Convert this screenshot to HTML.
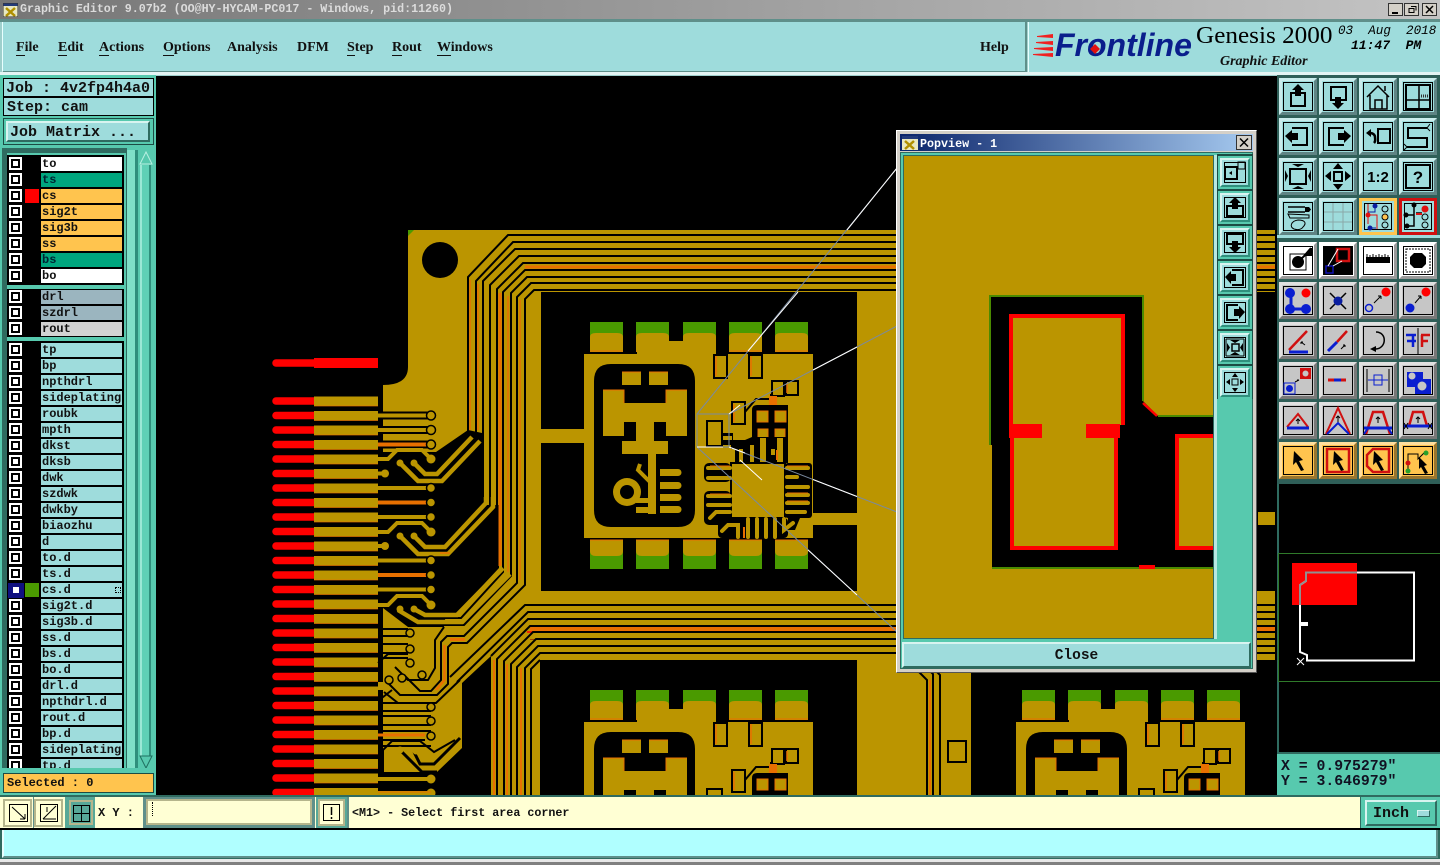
<!DOCTYPE html>
<html><head><meta charset="utf-8"><title>Graphic Editor</title>
<style>
html,body{margin:0;padding:0;background:#000}
#p{position:relative;width:1440px;height:865px;overflow:hidden;background:#000;font-family:"Liberation Mono",monospace;font-weight:bold;color:#111}
#p div,#p svg{position:absolute}
.m{font:bold 14px "Liberation Serif",serif;top:40px;white-space:nowrap}
.m u{text-decoration:none;border-bottom:1px solid #111}
.g{left:7px;width:117px;background:#000;overflow:hidden}
.g>div{position:relative!important;height:16px}
.g i{position:absolute;left:4px;top:3px;width:5px;height:5px;background:#fff;border:2px solid #000;box-shadow:0 0 0 2px #fff}
.g b{position:absolute;left:34px;top:1px;width:80px;height:14px;padding-left:1px;font-size:12px;line-height:15px;background:#9edcdc;overflow:hidden}
.g em{position:absolute;left:18px;top:1px;width:14px;height:14px}
.W{background:#fff!important}.T{background:#00a67e!important;color:#023!important}.Y{background:#ffc44e!important}.S{background:#9bb5bf!important}.L{background:#d3d3d3!important}
.bv{box-sizing:border-box;border:2px solid;border-color:#d8f4f0 #2f6b60 #2f6b60 #d8f4f0}
</style></head><body><div id="p">

<!-- PCB canvas -->
<svg width="1440" height="796" style="left:0;top:0" viewBox="0 0 1440 796">
<defs>
<clipPath id="cv"><rect x="156" y="76" width="1121" height="719"/></clipPath>
<g id="f"><path d="M276 0H314" stroke="#f00" stroke-width="7.500" stroke-linecap="round" fill="none"/><rect x="314" y="-4.500" width="64" height="9.500" fill="#bb9500"/><path d="M314 5H378" stroke="#e87000" stroke-width="1" stroke-opacity=".65"/></g>
<g id="tr"><path d="M378 0H431" stroke="#000" stroke-width="8" fill="none"/><path d="M378 0H431" stroke="#bb9500" stroke-width="4" fill="none"/><circle cx="431" cy="0" r="4.500" fill="#bb9500" stroke="#000" stroke-width="1.500"/></g>
<g id="tro"><path d="M378 0H431" stroke="#000" stroke-width="8" fill="none"/><path d="M378 0H431" stroke="#e87000" stroke-width="4" fill="none"/><circle cx="431" cy="0" r="4.500" fill="#bb9500" stroke="#000" stroke-width="1.500"/></g>
<g id="st"><path d="M378 0H385" stroke="#bb9500" stroke-width="4"/><circle cx="385" cy="0" r="4" fill="#bb9500"/></g>
<g id="pt"><path d="M378 0H388L397 -9H422L431 0" stroke="#bb9500" stroke-width="4" fill="none"/><circle cx="431" cy="0" r="4.500" fill="#bb9500"/><circle cx="400" cy="4" r="3.500" fill="#bb9500"/><circle cx="414" cy="4" r="3.500" fill="#bb9500"/></g>
<g id="gp"><rect x="0" y="322" width="33" height="30" fill="#4a9a00"/><path d="M0 352V337Q0 333 6 333H27Q33 333 33 337V352Z" fill="#bb9500"/><path d="M0 351H33" stroke="#e87000"/></g>
<g id="gq"><rect x="0" y="540" width="33" height="29" fill="#4a9a00"/><path d="M0 540V551Q0 556 6 556H27Q33 556 33 551V540Z" fill="#bb9500"/><path d="M0 540H33" stroke="#e87000"/></g>
<g id="bt">
<use href="#gp" x="590"/><use href="#gp" x="636"/><use href="#gp" x="683"/><use href="#gp" x="729"/><use href="#gp" x="775"/>
<path d="M637 354V342Q637 338 640 338H669V341H683V338H711Q716 338 716 343V354Z" fill="#bb9500"/>
<rect x="584" y="354" width="229" height="73" fill="#bb9500"/>
<path d="M594 427V381Q594 364 611 364H678Q695 364 695 381V427Z" fill="#000"/>
<g fill="#bb9500">
<rect x="622" y="372" width="19" height="13"/><rect x="649" y="372" width="19" height="13"/>
<path d="M603 390H624V403H666V390H687V427H666V422H654V427H636V422H624V427H603Z"/>
</g>
<path d="M603 390H624V403M687 390H666V403M622 372H641M649 372H668" stroke="#e87000" fill="none"/>
<g fill="#bb9500" stroke="#000" stroke-width="2">
<rect x="714" y="355" width="13" height="23"/><rect x="749" y="355" width="13" height="23"/>
<rect x="772" y="381" width="12" height="15"/><rect x="786" y="381" width="12" height="14"/>
<rect x="732" y="402" width="13" height="22"/>
</g>
<path d="M707 427V421H722V427" fill="none" stroke="#000" stroke-width="2"/>
<path d="M716 356V376M751 356V376M787 383V393M734 404V422" stroke="#e87000" stroke-width="1.500"/>
<path d="M745 412L756 399H771V394" stroke="#000" stroke-width="2" fill="none"/>
<path d="M773 396V405" stroke="#e87000" stroke-width="8"/>
<path d="M752 427V410Q752 405 757 405H788V427Z" fill="#000"/>
<g fill="#bb9500" stroke="#e87000"><rect x="757" y="411" width="11" height="11"/><rect x="775" y="411" width="11" height="11"/></g>
</g>
<g id="bb">
<rect x="584" y="427" width="229" height="111" fill="#bb9500"/>
<use href="#gq" x="590"/><use href="#gq" x="636"/><use href="#gq" x="683"/><use href="#gq" x="729"/><use href="#gq" x="775"/>
<path d="M594 427V510Q594 527 611 527H678Q695 527 695 510V427Z" fill="#000"/>
<g fill="#bb9500">
<rect x="603" y="427" width="21" height="9"/><rect x="666" y="427" width="21" height="9"/>
<path d="M636 427H654V441H668V454H656V477H648V454H622V441H636Z"/>
<circle cx="627" cy="492" r="14"/>
<rect x="648" y="468" width="8" height="46"/>
<path d="M660 469H678a3.500 3.500 0 0 1 0 7H660ZM660 482H678a3.500 3.500 0 0 1 0 7H660ZM660 494H678a3.500 3.500 0 0 1 0 7H660ZM660 506H678a3.500 3.500 0 0 1 0 7H660Z"/>
<rect x="636" y="498" width="20" height="5"/><rect x="636" y="507" width="20" height="6"/>
</g>
<circle cx="627" cy="492" r="7" fill="#000"/>
<path d="M640 464L638 470L650 482" stroke="#bb9500" stroke-width="4" fill="none"/>
<path d="M707 427V446H722V427" fill="#bb9500" stroke="#000" stroke-width="2"/>
<path d="M752 437V427H788V437Z" fill="#000"/>
<g fill="#bb9500" stroke="#e87000"><rect x="758" y="429" width="10" height="9"/><rect x="775" y="429" width="10" height="9"/></g>
<path d="M752 437H788V463H731V445H722V433H733V440H745L752 437Z" fill="#000"/>
<g stroke="#bb9500" fill="none"><path d="M763 438V462M780 438V462M771 452H775" stroke-width="6"/><path d="M733 449V463M741 449V463M752 445V463" stroke-width="4"/><path d="M723 438H732" stroke-width="4"/></g>
<path d="M777 450V460" stroke="#e87000" stroke-width="2"/>
<rect x="731" y="463" width="54" height="55" fill="#bb9500" stroke="#000" stroke-width="2"/>
<rect x="704" y="463" width="27" height="19" rx="5" fill="#000"/><rect x="704" y="491" width="27" height="34" rx="5" fill="#000"/>
<rect x="785" y="463" width="27" height="55" rx="3" fill="#000"/><rect x="718" y="518" width="70" height="20" rx="4" fill="#000"/><path d="M788 518H800L795 530H788Z" fill="#000"/>
<g stroke="#bb9500" stroke-width="4" stroke-linecap="round" fill="none"><path d="M708 468H730M708 478H730M708 496H730M708 505H730M710 518L716 512H730"/><path d="M787 468H808M787 477H797M787 487H808M787 495H808M787 503H808M787 512H805"/><path d="M722 531L728 525H738V537M748 519V537M757 519V537M766 519V537M775 519V537M784 519V530L793 523"/></g>
<path d="M710 466H730M787 466H808M787 493H808M787 501H808M710 494H730" stroke="#e87000" fill="none"/>
<path d="M744 527V538" stroke="#e87000" stroke-width="2"/>
</g>
</defs>
<g clip-path="url(#cv)">
<!-- fingers -->
<path d="M276 363H314" stroke="#f00" stroke-width="7.500" stroke-linecap="round"/><rect x="314" y="358" width="64" height="10" fill="#f00"/>
<use href="#f" y="401"/><use href="#f" y="415.500"/><use href="#f" y="430"/><use href="#f" y="444.500"/><use href="#f" y="459"/><use href="#f" y="473.500"/><use href="#f" y="488"/><use href="#f" y="502.500"/><use href="#f" y="517"/><use href="#f" y="531.500"/><use href="#f" y="546"/><use href="#f" y="560.500"/><use href="#f" y="575"/><use href="#f" y="589.500"/><use href="#f" y="604"/><use href="#f" y="618.500"/><use href="#f" y="633"/><use href="#f" y="647.500"/><use href="#f" y="662"/><use href="#f" y="676.500"/><use href="#f" y="691"/><use href="#f" y="705.500"/><use href="#f" y="720"/><use href="#f" y="734.500"/><use href="#f" y="749"/><use href="#f" y="763.500"/><use href="#f" y="778"/><use href="#f" y="792.500"/>
<!-- base gold -->
<g fill="#bb9500">
<path d="M408 230H1275V292H541V429H584V443H541V591H1275V660H971V795H857V660H540V795H491V656L462 683V748L437 772H383V690L378 690V682H383V608L408 627H444L446 613H457L499 568V505H482V433L468 430L436 452H383V385Q408 385 408 367Z"/>
<rect x="857" y="292" width="60" height="300"/>
<rect x="813" y="513" width="44" height="12"/>
<rect x="1258" y="512" width="17" height="13"/>
</g>
<path d="M408 230h6l-6 6z" fill="#4a9a00"/>
<circle cx="440" cy="260" r="18" fill="#000"/>
<!-- band orange -->
<path d="M525 267H1275" stroke="#e87000" stroke-width="3"/><path d="M527 632H1275" stroke="#f00" stroke-width="1.500"/><path d="M530 629H1275" stroke="#e87000" stroke-width="4"/><path d="M530 639.500H1275" stroke="#a04000" stroke-width="1"/>
<path d="M470 280V430M478 284V430M520 300V580M508 296V572" stroke="#e87000" stroke-width="1.500" fill="none"/><path d="M500 293V566" stroke="#e87000" stroke-width="3"/>
<path d="M494 660V795M507 664V795M521 668V795" stroke="#e87000" stroke-width="2" fill="none"/>
<!-- black trace lines top -->
<g stroke="#000" stroke-width="2" fill="none">
<path d="M1275 235H508L468 277V433L442 460"/>
<path d="M1275 242H513L476 281V433L450 462"/>
<path d="M1275 249H515L483 281V505"/>
<path d="M1275 256H519L490 285V505L450 552"/>
<path d="M1275 263H523L497 289V566L457 611H420"/>
<path d="M1275 270H525L503 292V572L461 618H420"/>
<path d="M1275 277H527L511 293V576L464 625H410L400 614"/>
<path d="M1275 283H531L517 297V583L464 636H447L441 642V680L431 691H420L404 675"/>
<path d="M1275 290H534L525 299V585L467 643H452L448 647V684L437 695H400L388 683"/>
<!-- lower band -->
<path d="M1275 605H525L450 677"/>
<path d="M1275 612H528L457 682"/>
<path d="M1275 619H528L491 656"/>
<path d="M1275 626H530L497 659V795"/>
<path d="M1275 632H533L504 661V795"/>
<path d="M1275 639H536L511 664V795"/>
<path d="M1275 646H538L517 667V795"/>
<path d="M1275 653H540L525 668V795"/>
<path d="M540 660L531 669V795"/>
<path d="M444 627L435 640V668L428 680H408L395 667"/>
<path d="M384 692L398 703H436L460 680"/>
</g>
<path d="M450 639.500H465" stroke="#e87000" stroke-width="3" fill="none"/>
<path d="M444.500 645V680L436 690" stroke="#e87000" stroke-width="2.500" fill="none"/>
<!-- gold trace bundles on black -->
<g stroke="#bb9500" stroke-width="4.500" fill="none">
<path d="M400 463L418 481H442L480 441"/><path d="M414 463L425 474H437L472 437"/>
<path d="M400 536L418 554H448L493 507V497"/><path d="M414 536L425 547H445L486 503V497"/>
<path d="M398 610L418 622H462L510 574"/><path d="M414 609L425 615H457L503 568"/>
</g>
<path d="M440 553H450" stroke="#e87000" stroke-width="1.500"/>
<use href="#tr" y="415.500"/><use href="#tr" y="430"/><use href="#tro" y="444.500"/>
<use href="#pt" y="459"/><use href="#st" y="473.500"/>
<use href="#tr" y="488"/><use href="#tro" y="502.500"/><use href="#tr" y="517"/>
<use href="#pt" y="532"/><use href="#st" y="546"/>
<use href="#tr" y="560.500"/><use href="#tro" y="575"/><use href="#tr" y="589.500"/>
<use href="#pt" y="605"/>
<!-- mid rows with pad 410 -->
<g stroke="#000" stroke-width="2" fill="none"><path d="M378 629H408M383 636H408M378 644H408M378 653H408M383 658H408"/><path d="M378 701L392 690"/><path d="M378 703H431M378 711H431M383 716H431M378 725H431M383 731H431M378 740H425M378 746H431"/></g>
<g fill="#bb9500" stroke="#000" stroke-width="1.500"><circle cx="410" cy="633" r="4"/><circle cx="410" cy="649" r="4"/><circle cx="410" cy="663" r="4"/><circle cx="422" cy="675" r="4"/><circle cx="389" cy="680" r="4"/><circle cx="402" cy="678" r="4"/><circle cx="431" cy="707" r="4"/><circle cx="431" cy="721" r="4"/><circle cx="431" cy="736" r="4"/></g>
<path d="M378 735H425" stroke="#e87000" stroke-width="3"/>
<path d="M378 663L388 654H408" stroke="#000" stroke-width="2" fill="none"/>
<!-- pattern at 750 -->
<path d="M383 772V750L392 741H420L434 752L455 740" stroke="#000" stroke-width="2" fill="none"/>
<path d="M400 750L422 772H437M414 752L420 764H434L460 738" stroke="#000" stroke-width="3" fill="none"/>
<g fill="#bb9500"><circle cx="400" cy="750" r="3.500"/><circle cx="416" cy="751" r="3.500"/></g>
<g stroke="#bb9500" stroke-width="4" fill="none"><path d="M378 779H431M378 793H431"/></g><circle cx="431" cy="779" r="4.500" fill="#bb9500"/><circle cx="431" cy="793" r="4.500" fill="#bb9500"/><path d="M378 792H431" stroke="#e87000"/>
<!-- blocks -->
<use href="#bt"/><use href="#bb"/>
<use href="#bt" y="368"/>
<use href="#bt" x="432" y="368"/>
<!-- right column detail -->
<rect x="948" y="741" width="18" height="21" fill="#bb9500" stroke="#000" stroke-width="2"/>
<path d="M918 671L927 680V795M930 671L933 674V795M936 671L940 675V795" stroke="#000" stroke-width="2" fill="none"/>
<path d="M930 680V795" stroke="#e87000" stroke-width="2"/>
<!-- leader lines -->
<g stroke="#7a8aa0" stroke-width="1" fill="none">
<path d="M697 414H729V447H697Z"/>
<path d="M697 414L897 168"/><path d="M729 414L897 326"/><path d="M729 447L897 512"/><path d="M697 447L897 632"/>
</g>
<g stroke="#fff" stroke-width="1" fill="none">
<path d="M748 351L798 292M847 230L897 168M813 370L857 347M813 479.500L857 496.500M808 550L857 595M697 447H723M729 447L745 453M740 460L762 480M740 405L729 414"/>
</g>
</g>
</svg>

<!-- title -->
<div style="left:0;top:0;width:1440px;height:19px;background:linear-gradient(90deg,#767676,#c4c4c4)"></div>
<svg style="left:3px;top:3px" width="15" height="14"><rect width="15" height="14" fill="#e8e8c0"/><rect width="15" height="3" fill="#223a7a"/><path d="M3 5L12 13M12 5L3 13" stroke="#b09000" stroke-width="2.500"/><rect y="0" width="15" height="14" fill="none" stroke="#333"/></svg>
<div style="left:20px;top:2px;font-size:11.700px;line-height:14px;color:#dcdcdc;white-space:pre;letter-spacing:-.03px">Graphic Editor 9.07b2 (OO@HY-HYCAM-PC017 - Windows, pid:11260)</div>
<svg style="left:1388px;top:3px" width="50" height="13"><g fill="#d4d0c8" stroke="#333"><rect x=".5" y=".5" width="14" height="12"/><rect x="16.500" y=".5" width="14" height="12"/><rect x="34.500" y=".5" width="14" height="12"/></g><path d="M4 10H10" stroke="#000" stroke-width="2"/><path d="M21 5.500h5v4h-5zM23 3.500h5v4" stroke="#000" fill="none"/><path d="M38 3L45 10M45 3L38 10" stroke="#000" stroke-width="1.500"/></svg>

<!-- menu -->
<div style="left:0;top:19px;width:1440px;height:57px;background:#9ecfcc"></div>
<div style="left:0;top:19px;width:1440px;height:3px;background:#5f8f8a"></div>
<div style="left:2px;top:22px;width:1022px;height:49px;background:#9edcdc;border-left:1px solid #e8ffff;border-bottom:2px solid #5f8f8a"></div>
<div style="left:1025px;top:22px;width:2px;height:50px;background:#5f8f8a"></div>
<div style="left:1028px;top:22px;width:412px;height:50px;background:#9edcdc;border-left:1px solid #e8ffff"></div>
<div style="left:0;top:72px;width:1440px;height:3px;background:#e4f4f4"></div>
<div class="m" style="left:16px"><u>F</u>ile</div><div class="m" style="left:58px"><u>E</u>dit</div><div class="m" style="left:99px"><u>A</u>ctions</div><div class="m" style="left:163px"><u>O</u>ptions</div><div class="m" style="left:227px">Analysis</div><div class="m" style="left:297px">DFM</div><div class="m" style="left:347px"><u>S</u>tep</div><div class="m" style="left:392px"><u>R</u>out</div><div class="m" style="left:437px"><u>W</u>indows</div><div class="m" style="left:980px">Help</div>

<!-- logo -->
<svg style="left:1032px;top:32px" width="24" height="28"><g fill="#f02020"><path d="M5 4L21 2V6L5 5ZM4 10L21 9V13L4 11ZM2 16L21 15V19L2 17ZM1 22L21 21V25L1 23Z"/></g></svg>
<div style="left:1055px;top:26px;font:italic bold 32px/38px 'Liberation Sans',sans-serif;color:#0a1e8c;white-space:nowrap">Frontline</div>
<svg style="left:1090px;top:44px" width="10" height="10"><path d="M5 0L10 5L5 10L0 5Z" fill="#e01010"/></svg>
<div style="left:1196px;top:21px;font:normal 24px/30px 'Liberation Serif',serif;color:#000;white-space:nowrap;transform:scaleX(1.05);transform-origin:0 0">Genesis 2000</div>
<div style="left:1220px;top:53px;font:italic bold 14px/17px 'Liberation Serif',serif;color:#111;white-space:nowrap">Graphic Editor</div>
<div style="left:1338px;top:23px;font:italic normal 12.600px/16px 'Liberation Mono',monospace;color:#000;white-space:pre">03  Aug  2018</div>
<div style="left:1351px;top:38px;font:italic bold 13px/16px 'Liberation Mono',monospace;color:#000;white-space:pre">11:47  PM</div>

<!-- left panel -->
<div style="left:0;top:75px;width:156px;height:722px;background:#57c9ae"></div>
<div style="left:3px;top:78px;width:149px;height:17px;background:#9edcdc;border:1px solid #000;font-size:15px;line-height:19px;text-indent:2px;white-space:pre">Job : 4v2fp4h4a0</div>
<div style="left:3px;top:97px;width:149px;height:17px;background:#9edcdc;border:1px solid #000;font-size:15px;line-height:19px;text-indent:3px;white-space:pre">Step: cam</div>
<div style="left:3px;top:118px;width:149px;height:25px;border:1px solid #1c4c44"></div>
<div class="bv" style="left:6px;top:121px;width:144px;height:21px;background:#9edcdc;font-size:15px;line-height:20px;text-indent:2px;white-space:pre">Job Matrix ...</div>
<div style="left:2px;top:148px;width:125px;height:622px;background:#2f6b60"></div>
<div style="left:5px;top:153px;width:121px;height:617px;background:#57c9ae;border-left:2px solid #2f6b60;box-sizing:border-box"></div>
<div style="left:127px;top:150px;width:8px;height:620px;background:#7fe0c8"></div>
<div style="left:135px;top:150px;width:3px;height:620px;background:#2f8f7c"></div>
<div style="left:140px;top:165px;width:11px;height:592px;background:#5fd0b6;border-left:2px solid #9be8d6;border-right:2px solid #2f8f7c;box-sizing:border-box"></div>
<svg style="left:139px;top:151px" width="14" height="14"><path d="M7 1L13 13H1Z" fill="#57c9ae" stroke="#b8f0e2"/></svg>
<svg style="left:139px;top:755px" width="14" height="14"><path d="M7 13L13 1H1Z" fill="#57c9ae" stroke="#1f7060"/></svg>
<div class="g" style="top:155px;height:130px"><div style="height:1px"></div>
<div><i></i><b class="W">to</b></div><div><i></i><b class="T">ts</b></div><div><i></i><em style="background:#f00"></em><b class="Y">cs</b></div><div><i></i><b class="Y">sig2t</b></div><div><i></i><b class="Y">sig3b</b></div><div><i></i><b class="Y">ss</b></div><div><i></i><b class="T">bs</b></div><div><i></i><b class="W">bo</b></div></div>
<div class="g" style="top:289px;height:48px"><div><i></i><b class="S">drl</b></div><div><i></i><b class="S">szdrl</b></div><div><i></i><b class="L">rout</b></div></div>
<div class="g" style="top:341px;height:428px"><div style="height:1px"></div>
<div><i></i><b>tp</b></div><div><i></i><b>bp</b></div><div><i></i><b>npthdrl</b></div><div><i></i><b>sideplating</b></div><div><i></i><b>roubk</b></div><div><i></i><b>mpth</b></div><div><i></i><b>dkst</b></div><div><i></i><b>dksb</b></div><div><i></i><b>dwk</b></div><div><i></i><b>szdwk</b></div><div><i></i><b>dwkby</b></div><div><i></i><b>biaozhu</b></div><div><i></i><b>d</b></div><div><i></i><b>to.d</b></div><div><i></i><b>ts.d</b></div><div style="background:#000"><i style="background:#fff"></i><em style="background:#4a9a00"></em><b>cs.d</b><span style="position:absolute;left:108px;top:5px;width:4px;height:4px;border:1px dotted #000"></span></div><div><i></i><b>sig2t.d</b></div><div><i></i><b>sig3b.d</b></div><div><i></i><b>ss.d</b></div><div><i></i><b>bs.d</b></div><div><i></i><b>bo.d</b></div><div><i></i><b>drl.d</b></div><div><i></i><b>npthdrl.d</b></div><div><i></i><b>rout.d</b></div><div><i></i><b>bp.d</b></div><div><i></i><b>sideplating</b></div><div><i></i><b>tp.d</b></div></div>
<div style="left:8px;top:583px;width:16px;height:15px;background:#101080"></div>
<div style="left:13px;top:587px;width:6px;height:6px;background:#fff"></div>
<div style="left:0;top:768px;width:156px;height:29px;background:#57c9ae"></div>
<div style="left:3px;top:773px;width:149px;height:18px;background:#ffc44e;border:1px solid #1c4c44;font-size:12px;line-height:18px;text-indent:3px;white-space:pre">Selected : 0</div>

<!-- palette -->
<div style="left:1277px;top:75px;width:163px;height:409px;background:#2f5f58"></div>
<div style="left:1277px;top:235px;width:163px;height:3px;background:#9edcdc"></div>
<svg style="left:1277px;top:76px" width="163" height="408" viewBox="1277 76 163 408">
<defs>
<g id="bv"><rect width="38" height="37"/><path d="M0 0H38L35 3H3V34L0 37Z" fill="#fff" opacity=".45"/><path d="M38 37H0L3 34H35V3L38 0Z" fill="#000" opacity=".4"/><rect x="4.500" y="4.500" width="29" height="28" fill="none" stroke="#000"/></g>
</defs>
<g fill="#9edcdc">
<g transform="translate(1279 78)"><use href="#bv"/><path d="M12 15h14v13H12z" fill="none" stroke="#000" stroke-width="2"/><path d="M19 6l-6 6h3v6h6v-6h3z" fill="#000"/></g>
<g transform="translate(1319 78)"><use href="#bv"/><path d="M12 9h15v13H12z" fill="none" stroke="#000" stroke-width="2"/><path d="M19 31l-6 -6h3v-6h6v6h3z" fill="#000"/></g>
<g transform="translate(1359 78)"><use href="#bv"/><path d="M8 19L19 8L30 19M11 17V31H28V17M16 31V22H23V31M26 8V13" fill="none" stroke="#000" stroke-width="1.500"/></g>
<g transform="translate(1399 78)"><use href="#bv"/><path d="M7 7h24v24H7zM7 22H31M20 7V31" fill="none" stroke="#000" stroke-width="1.500"/><path d="M7 7h24v24H7z" fill="none" stroke="#000" stroke-width="2"/><path d="M22 18h7" stroke="#333" stroke-dasharray="1 1" stroke-width="3"/></g>
<g transform="translate(1279 118)"><use href="#bv"/><path d="M13 10h15v17H13" fill="none" stroke="#000" stroke-width="2"/><path d="M6 18l7-6v3h6v7h-6v3z" fill="#000"/></g>
<g transform="translate(1319 118)"><use href="#bv"/><path d="M25 10H10v17h15" fill="none" stroke="#000" stroke-width="2"/><path d="M32 18l-7-6v3h-6v7h6v3z" fill="#000"/></g>
<g transform="translate(1359 118)"><use href="#bv"/><path d="M19 11h12v14H19z" fill="none" stroke="#000" stroke-width="2"/><path d="M15 25c2-2 1-4 1-6s-2-4-5-4" fill="none" stroke="#000" stroke-width="2.500"/><path d="M7 15l5-4v8z" fill="#000"/></g>
<g transform="translate(1399 118)"><use href="#bv"/><path d="M28 10H9V20H28V29H8" fill="none" stroke="#000" stroke-width="2"/><path d="M31 6l-3 4 3 3M5 26l3 3-3 3" fill="none" stroke="#000"/></g>
<g transform="translate(1279 158)"><use href="#bv"/><path d="M11 11H27V26H11Z" fill="none" stroke="#000" stroke-width="2"/><path d="M19 9l-6-3h12zM19 28l-6 3h12zM9 18l-3-6v12zM29 18l3-6v12z" fill="#000"/></g>
<g transform="translate(1319 158)"><use href="#bv"/><path d="M15 14H23V23H15Z" fill="none" stroke="#000" stroke-width="2"/><path d="M19 5l-5 6h10zM19 32l-5-6h10zM6 18l6-5v10zM32 18l-6-5v10z" fill="#000"/></g>
<g transform="translate(1359 158)"><use href="#bv"/><text x="19" y="24" text-anchor="middle" font-family="Liberation Sans,sans-serif" font-weight="bold" font-size="15" fill="#000">1:2</text></g>
<g transform="translate(1399 158)"><use href="#bv"/><rect x="7" y="7" width="24" height="23" fill="none" stroke="#000" stroke-width="2"/><text x="19" y="25" text-anchor="middle" font-family="Liberation Sans,sans-serif" font-weight="bold" font-size="17" fill="#000">?</text></g>
<g transform="translate(1279 198)"><use href="#bv"/><path d="M9 9H26M9 14H26" stroke="#000" stroke-width="1.500"/><path d="M26 9h4l2 2.500-2 2.500h-4" fill="#000"/><path d="M9 16L30 17V20H11Z" fill="none" stroke="#000"/><path d="M15 31c-5-2-3-8 4-9 7 0 9 3 5 7-2 3-6 3-9 2z" fill="none" stroke="#000"/></g>
<g transform="translate(1319 198)"><use href="#bv"/><path d="M5 14H33M5 24H33M14 5V32M24 5V32" stroke="#8aa8a8"/></g>
<g transform="translate(1359 198)"><rect width="38" height="37" fill="#ffc44e"/><rect x="3" y="3" width="32" height="31"/><rect x="5.500" y="5.500" width="27" height="26" fill="none" stroke="#000"/><path d="M9 6V26M9 17H18V31" stroke="#e01010" fill="none"/><path d="M16 8V14H9M11 30H17" stroke="#0a1ea0" fill="none"/><circle cx="16" cy="8" r="2.500" fill="#0a1ea0"/><circle cx="9" cy="17" r="2.500" fill="#e01010"/><circle cx="11" cy="30" r="2.500" fill="#0a1ea0"/><circle cx="26" cy="11" r="3" fill="none" stroke="#000"/><circle cx="26" cy="19" r="3" fill="#ffc44e" stroke="#000"/><circle cx="26" cy="27" r="3" fill="none" stroke="#000"/></g>
<g transform="translate(1399 198)"><rect width="38" height="37" fill="#d01010"/><rect x="3" y="3" width="32" height="31"/><rect x="5.500" y="5.500" width="27" height="26" fill="none" stroke="#000"/><path d="M15 8V17H7M15 17V28H8M18 16V14M20 16V14M22 16V14" stroke="#000" stroke-width="1.500" fill="none"/><path d="M17 16H23" stroke="#e01010" stroke-width="2"/><circle cx="15" cy="7" r="2.500" fill="#000"/><circle cx="7" cy="17" r="2.500" fill="#000"/><circle cx="8" cy="28" r="2.500" fill="#000"/><circle cx="26" cy="11" r="3.500" fill="#e01010"/><circle cx="26" cy="19" r="3" fill="none" stroke="#000"/><circle cx="26" cy="27" r="3" fill="none" stroke="#000"/></g>
</g>
<g fill="#fff">
<g transform="translate(1279 242)"><use href="#bv"/><rect x="11" y="12" width="16" height="16" fill="none" stroke="#000"/><circle cx="19" cy="20" r="6" fill="#000"/><path d="M23 16L32 8M32 6V13H26L32 6" stroke="#000" stroke-width="2" fill="#000"/></g>
<g transform="translate(1319 242)"><use href="#bv"/><rect x="5" y="5" width="28" height="27" fill="#000"/><rect x="18" y="7" width="12" height="12" fill="none" stroke="#d01010" stroke-width="2.500"/><rect x="7" y="24" width="7" height="7" fill="none" stroke="#1010b0" stroke-width="1.500"/><path d="M14 24L23 19M9 24L19 7" stroke="#fff" fill="none"/></g>
<g transform="translate(1359 242)"><use href="#bv"/><rect x="7" y="15" width="24" height="6" fill="#000"/><path d="M8 12v4M11 13v3M14 12v4M17 13v3M20 12v4M23 13v3M26 12v4M29 13v3" stroke="#000"/></g>
<g transform="translate(1399 242)"><use href="#bv"/><rect x="7" y="7" width="24" height="23" fill="none" stroke="#000" stroke-dasharray="2 1"/><path d="M15 11H23L27 15V22L23 26H15L11 22V15Z" fill="#000"/></g>
</g>
<g fill="#c6c6c6">
<g transform="translate(1279 282)"><use href="#bv"/><path d="M12 11V27H26" stroke="#0a1ed0" stroke-width="3" fill="none"/><circle cx="11" cy="11" r="5" fill="#0a1ed0"/><circle cx="11" cy="27" r="5" fill="#0a1ed0"/><circle cx="27" cy="27" r="5" fill="#0a1ed0"/><circle cx="27" cy="11" r="4.500" fill="#f00"/></g>
<g transform="translate(1319 282)"><use href="#bv"/><path d="M11 11L27 27M27 11L11 27" stroke="#000" stroke-width="1.500"/><circle cx="19" cy="19" r="4.500" fill="#0a1ea0"/></g>
<g transform="translate(1359 282)"><use href="#bv"/><circle cx="10" cy="26" r="3.500" fill="none" stroke="#0a1ed0" stroke-width="1.500"/><path d="M15 21L22 14M22 14h-3M22 14v3" stroke="#000" fill="none"/><circle cx="27" cy="10" r="4.500" fill="#f00"/></g>
<g transform="translate(1399 282)"><use href="#bv"/><circle cx="11" cy="26" r="4.500" fill="#0a1ed0"/><path d="M16 21L22 14M22 14h-3M22 14v3" stroke="#000" fill="none"/><circle cx="27" cy="10" r="4.500" fill="#f00"/></g>
<g transform="translate(1279 322)"><use href="#bv"/><path d="M10 28L28 9" stroke="#d01010" stroke-width="2.500"/><path d="M10 30H29" stroke="#0a1ed0" stroke-width="3"/><path d="M26 23L22 20M22 20v2M22 20h2" stroke="#000" fill="none"/></g>
<g transform="translate(1319 322)"><use href="#bv"/><path d="M9 29L18 20" stroke="#0a1ed0" stroke-width="3"/><path d="M18 20L28 9" stroke="#d01010" stroke-width="2.500"/><path d="M22 27L26 23M26 23h-2M26 23v2" stroke="#000" fill="none"/></g>
<g transform="translate(1359 322)"><use href="#bv"/><path d="M17 10C28 10 28 26 17 27" stroke="#000" stroke-width="1.500" fill="none"/><path d="M11 27l6-3v6z" fill="#000"/></g>
<g transform="translate(1399 322)"><use href="#bv"/><path d="M17 13H7M17 19H8M14 13V25" stroke="#0a1ed0" stroke-width="2.500" fill="none"/><path d="M19 6V32" stroke="#000"/><path d="M22 13H31M22 19H29M23 13V25" stroke="#d01010" stroke-width="2.500" fill="none"/></g>
<g transform="translate(1319 362)"><use href="#bv"/><path d="M9 18H27" stroke="#d01010" stroke-width="3"/><path d="M15 18H22" stroke="#0a1ed0" stroke-width="3"/></g>
<g transform="translate(1279 362)"><use href="#bv"/><rect x="5" y="21" width="11" height="11" fill="#fff" fill-opacity="0" stroke="#0a1ed0"/><circle cx="10.500" cy="26.500" r="3.500" fill="#0a1ed0"/><rect x="21" y="6" width="11" height="11" fill="#d01010"/><circle cx="26.500" cy="11.500" r="3" fill="#c6c6c6"/><path d="M16 20L20 18M20 18h-2" stroke="#000" fill="none"/></g>
<g transform="translate(1359 362)"><use href="#bv"/><path d="M8 7V30M30 7V30" stroke="#000"/><path d="M9 18H29" stroke="#0a1ed0"/><rect x="15" y="13" width="8" height="10" fill="none" stroke="#0a1ed0"/></g>
<g transform="translate(1399 362)"><use href="#bv"/><path d="M8 10H24V17H32V32H16V25H8Z" fill="#0a1ed0"/><circle cx="13" cy="14" r="3.500" fill="#c6c6c6"/><circle cx="23" cy="24" r="4.500" fill="#c6c6c6"/></g>
<g transform="translate(1279 402)"><use href="#bv"/><path d="M8 25L19 12L29 25" stroke="#d01010" stroke-width="2" fill="none"/><path d="M8 26H30" stroke="#0a1ed0" stroke-width="3"/><path d="M19 22V17M17 19l2-2 2 2" stroke="#000" fill="none"/></g>
<g transform="translate(1319 402)"><use href="#bv"/><path d="M7 32L19 6L31 32" stroke="#d01010" stroke-width="2" fill="none"/><path d="M8 32L19 21L30 32" stroke="#0a1ed0" stroke-width="2" fill="none"/><path d="M19 20V14M17 16l2-2 2 2" stroke="#000" fill="none"/></g>
<g transform="translate(1359 402)"><use href="#bv"/><path d="M7 32L14 10H24L31 32" stroke="#d01010" stroke-width="2.500" fill="none"/><path d="M5 26H33" stroke="#0a1ed0" stroke-width="3"/><path d="M5 32L9 26M33 32L29 26" stroke="#0a1ed0" stroke-width="2"/><path d="M19 21V15M17 17l2-2 2 2" stroke="#000" fill="none"/></g>
<g transform="translate(1399 402)"><use href="#bv"/><path d="M10 24L14 10H24L28 24" stroke="#d01010" stroke-width="2.500" fill="none"/><path d="M5 24H33" stroke="#0a1ed0" stroke-width="3"/><path d="M5 21L9 27M9 21L5 27M29 21L33 27M33 21L29 27" stroke="#000"/><path d="M19 21V15M17 17l2-2 2 2" stroke="#000" fill="none"/></g>
</g>
<g fill="#ffc44e">
<g transform="translate(1279 442)"><use href="#bv"/><path d="M15 9L24 18L20 19L25 28L22 29L17 20L14 23Z" fill="#000"/></g>
<g transform="translate(1319 442)"><use href="#bv"/><rect x="8" y="7" width="22" height="23" fill="none" stroke="#d01010" stroke-width="2.500"/><path d="M15 9L24 18L20 19L25 28L22 29L17 20L14 23Z" fill="#000"/></g>
<g transform="translate(1359 442)"><use href="#bv"/><path d="M14 7H30V30H14L8 24V13Z" fill="none" stroke="#d01010" stroke-width="2.500"/><path d="M15 9L24 18L20 19L25 28L22 29L17 20L14 23Z" fill="#000"/></g>
<g transform="translate(1399 442)"><use href="#bv"/><path d="M9 22V12H19V17L27 9M9 22V28" stroke="#000" fill="none"/><circle cx="9" cy="21" r="2.500" fill="#d01010"/><circle cx="27" cy="11" r="2.500" fill="#2aa02a"/><circle cx="9" cy="29" r="2.500" fill="#2aa02a"/><path d="M20 15L28 23L25 24L29 31L26 32L22 25L20 27Z" fill="#000"/></g>
</g>
</svg>

<!-- overview -->
<div style="left:1277px;top:484px;width:163px;height:268px;background:#000;border-left:2px solid #2f6b60;box-sizing:border-box"></div>
<svg style="left:1277px;top:484px" width="163" height="268" viewBox="1277 484 163 268">
<path d="M1278 553.500H1440M1278 681.500H1440M1278.500 553V681" stroke="#2f7a2a" fill="none"/>
<rect x="1292" y="563" width="65" height="42" fill="#f00"/>
<path d="M1357 572.500H1414V660.500H1307V655L1300 652V585L1306 581V572.500H1357" fill="none" stroke="#fff" stroke-width="2"/>
<path d="M1357 572.500H1306V581L1300 585V605" fill="none" stroke="#909090" stroke-width="2"/>
<rect x="1301" y="622" width="7" height="4" fill="#fff"/>
<path d="M1297 658L1304 665M1304 658L1297 665" stroke="#fff"/>
</svg>
<div style="left:1277px;top:752px;width:163px;height:43px;background:#57c9ae;border-top:2px solid #2f6b60;box-sizing:border-box"></div>
<div style="left:1281px;top:760px;font-size:14.800px;line-height:15px;white-space:pre;color:#112">X = 0.975279"
Y = 3.646979"</div>

<!-- bottom -->
<div style="left:0;top:795px;width:1440px;height:70px;background:#2f6b60"></div>
<div style="left:0;top:797px;width:1360px;height:31px;background:#ffffd4"></div>
<div style="left:33px;top:797px;width:1px;height:31px;background:#5f8f8a"></div>
<div style="left:65px;top:797px;width:30px;height:31px;background:#57a898"></div>
<svg style="left:2px;top:798px" width="94" height="30"><g fill="none" stroke="#b5b58c" stroke-width="2"><rect x="2" y="2" width="27" height="26"/><rect x="33" y="2" width="27" height="26"/><rect x="68" y="3" width="22" height="23"/></g><g fill="none" stroke="#000"><rect x="7.500" y="6.500" width="18" height="17"/><rect x="38.500" y="6.500" width="17" height="17"/><rect x="71.500" y="7.500" width="16" height="16"/><path d="M10 9L23 21M23 21h-5M23 21v-5M41 21L54 8M45 14V9M41 21H54M71.500 15.500H87.500M79.500 7.500V23.500"/></g></svg>
<div style="left:98px;top:805px;font-size:12px;line-height:16px;white-space:pre">X Y :</div>
<div style="left:143px;top:797px;width:172px;height:31px;background:#5f8f8a"></div>
<div style="left:146px;top:799px;width:166px;height:26px;background:#ffffd4;border:2px solid #b5b58c;box-sizing:border-box"></div>
<div style="left:152px;top:802px;width:1px;height:14px;border-left:1px dotted #000"></div>
<div style="left:316px;top:797px;width:31px;height:31px;background:#57a898"></div>
<svg style="left:318px;top:799px" width="27" height="27"><rect x="1" y="1" width="25" height="25" fill="#ffffd4" stroke="#b5b58c" stroke-width="2"/><rect x="5.500" y="5.500" width="16" height="16" fill="none" stroke="#000"/><path d="M13.500 8V16M13.500 18V20" stroke="#000" stroke-width="1.500"/></svg>
<div style="left:347px;top:797px;width:2px;height:31px;background:#5f8f8a"></div>
<div style="left:352px;top:805px;font-size:11.700px;line-height:16px;white-space:pre;color:#111">&lt;M1&gt; - Select first area corner</div>
<div style="left:1361px;top:797px;width:79px;height:31px;background:#57c9ae"></div>
<div class="bv" style="left:1365px;top:800px;width:72px;height:26px;background:#57c9ae;font-size:15px;line-height:24px;text-indent:6px;white-space:pre">Inch</div>
<div class="bv" style="left:1417px;top:810px;width:13px;height:7px;background:#9edcdc;border-width:1px"></div>
<div style="left:0;top:828px;width:1440px;height:2px;background:#000"></div>
<div style="left:2px;top:830px;width:1436px;height:28px;background:#b0ffff;box-sizing:border-box;border-left:2px solid #e8ffff;border-bottom:2px solid #5f8f8a;border-right:2px solid #5f8f8a"></div>
<div style="left:0;top:830px;width:2px;height:29px;background:#2f6b60"></div>
<div style="left:0;top:859px;width:1440px;height:3px;background:#e8e8e8"></div>
<div style="left:0;top:862px;width:1440px;height:3px;background:#808080"></div>

<!-- popview -->
<div style="left:896px;top:130px;width:361px;height:543px;background:#d4d0c8;border:1px solid #fff;border-right-color:#555;border-bottom-color:#555;box-sizing:border-box"></div>
<div style="left:900px;top:134px;width:353px;height:17px;background:linear-gradient(90deg,#0a246a,#a6caf0)"></div>
<svg style="left:902px;top:136px" width="16" height="14"><rect width="16" height="14" fill="#e8e8c0"/><rect width="16" height="3" fill="#223a7a"/><path d="M3 5L12 13M12 5L3 13" stroke="#b09000" stroke-width="2.500"/></svg>
<div style="left:920px;top:137px;font-size:11.700px;line-height:14px;color:#fff;white-space:pre">Popview - 1</div>
<svg style="left:1236px;top:135px" width="16" height="15"><rect x=".5" y=".5" width="15" height="14" fill="#d4d0c8" stroke="#333"/><path d="M4 3.500L12 11.500M12 3.500L4 11.500" stroke="#000" stroke-width="1.500"/></svg>
<div style="left:900px;top:152px;width:353px;height:517px;background:#2f6b60"></div>
<div style="left:901px;top:153px;width:351px;height:515px;background:#57c9ae"></div>
<svg style="left:903px;top:155px" width="311" height="484" viewBox="903 155 311 484">
<rect x="903" y="155" width="311" height="484" fill="#2f6b60"/>
<rect x="904" y="156" width="309" height="482" fill="#bb9500"/>
<path d="M990 296H1143V401L1158 416H1213V568H992V445H990Z" fill="#000"/>
<path d="M990 445V296H1143V401M1158 416H1213M992 568H1213" fill="none" stroke="#4a8a00" stroke-width="2"/>
<path d="M1143 403L1157 416" stroke="#f00" stroke-width="2.500"/>
<path d="M1011 425V316H1123V425H1086V438H1116V548H1012V438H1042V425Z" fill="#bb9500"/>
<path d="M1011 425V316H1123V425M1012 438V548H1116V438" fill="none" stroke="#f00" stroke-width="4"/>
<rect x="1009" y="424" width="33" height="14" fill="#f00"/><rect x="1086" y="424" width="34" height="14" fill="#f00"/>
<rect x="1177" y="436" width="36" height="112" fill="#bb9500"/>
<path d="M1213 436H1177V548H1213" fill="none" stroke="#f00" stroke-width="4"/>
<rect x="1139" y="565" width="16" height="4" fill="#f00"/>
</svg>
<div style="left:1214px;top:155px;width:3px;height:484px;background:#b8e8e0"></div>
<div style="left:1217px;top:154px;width:36px;height:245px;background:#1c4c44"></div>
<svg style="left:1218px;top:155px" width="34" height="244" viewBox="0 0 34 244">
<defs><g id="pb"><rect width="34" height="33" fill="#57c9ae"/><rect x="2" y="2" width="30" height="29" fill="#9edcdc"/><path d="M2 2H32L30 4H4V29L2 31Z" fill="#d8f4f0"/><path d="M32 31H2L4 29H30V4L32 2Z" fill="#2f8f7c"/><rect x="6.500" y="6.500" width="21" height="20" fill="none" stroke="#000"/></g></defs>
<g><use href="#pb" y="1"/><rect x="7" y="12" width="12" height="12" fill="none" stroke="#000" stroke-width="2"/><rect x="20" y="7" width="7" height="7" fill="none" stroke="#000"/><path d="M11 18l3-2v4z" fill="#000"/></g>
<g transform="translate(0 36)"><use href="#pb"/><path d="M9 15H25V25H9Z" fill="none" stroke="#000" stroke-width="2"/><path d="M17 6l-6 6h3v6h6v-6h3z" fill="#000"/></g>
<g transform="translate(0 71)"><use href="#pb"/><path d="M9 8H25V18H9Z" fill="none" stroke="#000" stroke-width="2"/><path d="M17 27l-6-6h3v-6h6v6h3z" fill="#000"/></g>
<g transform="translate(0 106)"><use href="#pb"/><path d="M14 9H25V24H14" fill="none" stroke="#000" stroke-width="2"/><path d="M7 16l6-6v3h5v7h-5v3z" fill="#000"/></g>
<g transform="translate(0 141)"><use href="#pb"/><path d="M20 9H9V24H20" fill="none" stroke="#000" stroke-width="2"/><path d="M27 16l-6-6v3h-5v7h5v3z" fill="#000"/></g>
<g transform="translate(0 176)"><use href="#pb"/><rect x="14" y="13" width="7" height="7" fill="none" stroke="#000" stroke-width="1.500"/><path d="M8 8H26M8 25H26M8 8V25M26 8V25" stroke="#000"/><path d="M12 9h10l-5 3zM12 24h10l-5-3zM9 12v9l3-4.500zM25 12v9l-3-4.500z" fill="#000"/></g>
<g transform="translate(0 211)"><use href="#pb"/><rect x="14" y="13" width="6" height="6" fill="none" stroke="#000"/><path d="M17 7l-3 4h6zM17 26l-3-4h6zM8 16l4-3v6zM26 16l-4-3v6z" fill="#000"/></g>
</svg>
<div class="bv" style="left:902px;top:642px;width:349px;height:26px;background:#9edcdc;font-size:14.500px;line-height:24px;text-align:center">Close</div>

</div></body></html>
